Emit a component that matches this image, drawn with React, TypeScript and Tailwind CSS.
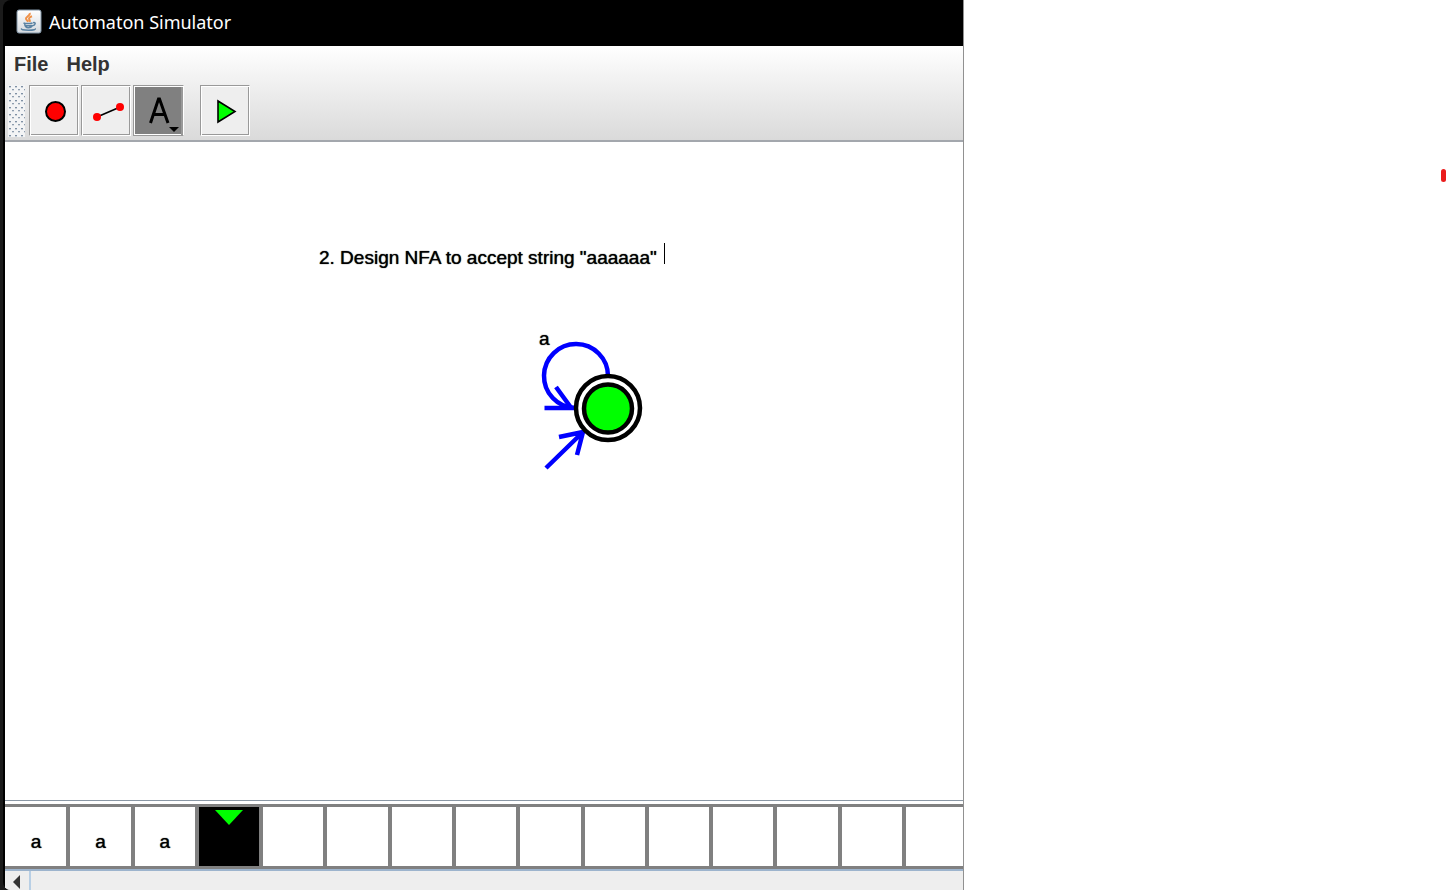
import type { ReactNode } from "react";

const tape: string[] = ["a", "a", "a", "", "", "", "", "", "", "", "", "", "", "", ""];
const head = 3;

function JavaIcon() {
  return (
    <svg width="26" height="26" viewBox="0 0 26 26" aria-hidden="true">
      <defs>
        <linearGradient id="tile" x1="0" y1="0" x2="0" y2="1">
          <stop offset="0" stopColor="#ffffff" />
          <stop offset="1" stopColor="#d3d8dd" />
        </linearGradient>
      </defs>
      <rect x="1" y="1" width="24" height="23" rx="2" fill="url(#tile)" stroke="#8296a8" strokeWidth="1" />
      <path d="M13.600 4c1.200 2.200-3.200 3.400-3.600 5.200-.3 1.600 1.500 2.500 2.200 3.500M16 7.300c-2.200.8-3.400 1.700-2.800 3 .4.9 1.100 1.400.4 2.600" fill="none" stroke="#ef9148" strokeWidth="2" />
      <path d="M7.500 14c1.700.8 7.300.8 9 0M8.700 14.700c.2 3 1 4 3.600 4s3.500-.8 3.900-2.700M17 13.800c3-1 3 2.300-.6 3M9.300 16.700h6.400" fill="none" stroke="#5a82a2" strokeWidth="1.500" />
      <path d="M5.800 19.500c-1.500 1 1.500 1.700 6.700 1.700s7.800-.7 6.500-1.700" fill="none" stroke="#5a82a2" strokeWidth="1.400" />
    </svg>
  );
}

function ToolButton({ label, active = false, children }: { label: string; active?: boolean; children: ReactNode }) {
  return (
    <button
      type="button"
      aria-label={label}
      aria-pressed={active}
      className={
        active
          ? "flex h-[51px] w-[51px] items-center justify-center border border-[#999] border-r-white bg-[#808080] shadow-[inset_1px_1px_0_#fff,inset_-2px_0_0_#999,inset_0_-1px_0_#fff]"
          : "flex h-[51px] w-[50px] items-center justify-center border border-[#999] border-r-white border-b-white bg-[#eee] shadow-[inset_1px_1px_0_#fff,inset_-1px_-1px_0_#999]"
      }
    >
      {children}
    </button>
  );
}

function Toolbar() {
  return (
    <div role="toolbar" aria-label="Tools" className="flex h-[58px] items-start pt-[3px] pl-[3px]">
      <svg width="17" height="52" className="mr-1" aria-hidden="true">
        <defs>
          <pattern id="grip" width="6" height="7" patternUnits="userSpaceOnUse">
            <rect width="6" height="7" fill="#f3f4f5" />
            <rect x="1" y="1" width="2" height="1" fill="#7f90a4" />
            <rect x="1" y="2" width="2" height="1" fill="#c8d0d8" />
            <rect x="4" y="4" width="2" height="1" fill="#8f9eaf" />
            <rect x="4" y="5" width="2" height="1" fill="#d3d9df" />
          </pattern>
        </defs>
        <rect width="17" height="52" fill="url(#grip)" />
      </svg>
      <div className="flex gap-0.5">
        <ToolButton label="State">
          <svg width="48" height="48" viewBox="0 0 48 48">
            <circle cx="25.500" cy="24.500" r="9.500" fill="#f00" stroke="#000" strokeWidth="2" />
          </svg>
        </ToolButton>
        <ToolButton label="Transition">
          <svg width="48" height="48" viewBox="0 0 48 48">
            <path d="M15 30 37 20.500" stroke="#000" strokeWidth="1.600" />
            <circle cx="15" cy="30" r="4" fill="#f00" />
            <circle cx="38" cy="20" r="4" fill="#f00" />
          </svg>
        </ToolButton>
        <ToolButton label="Text" active>
          <svg width="48" height="48" viewBox="0 0 48 48">
            <path d="M15.500 36 23.500 12h1L33 36M18.500 27.500h12" fill="none" stroke="#000" strokeWidth="3" />
            <path d="M34 40h10l-5 5z" fill="#000" />
          </svg>
        </ToolButton>
      </div>
      <div className="ml-4">
        <ToolButton label="Run">
          <svg width="48" height="48" viewBox="0 0 48 48">
            <path d="M17 14v21l17-10.500z" fill="#0f0" stroke="#000" strokeWidth="1.600" />
          </svg>
        </ToolButton>
      </div>
    </div>
  );
}

function Diagram() {
  return (
    <svg width="110" height="140" viewBox="535 335 110 140" className="absolute top-[193px] left-[530px]" role="img" aria-label="Accepting start state with a loop">
      <g fill="none" stroke="#00f" strokeWidth="4.500">
        <path d="M608 376a32 32 0 1 0-33 32" />
        <path d="M544.500 408H575M556 387l16 22" />
        <path d="M546 468 583 432M559 437l24-5-6 23" />
      </g>
      <circle cx="608" cy="408" r="32" fill="#fff" stroke="#000" strokeWidth="4.500" />
      <circle cx="608" cy="408.500" r="24" fill="#0f0" stroke="#000" strokeWidth="4.500" />
    </svg>
  );
}

function Canvas() {
  return (
    <main className="relative min-h-[400px] flex-1 overflow-hidden bg-white text-[19px] leading-6 text-black">
      <div className="absolute top-[101px] left-[314px] flex items-start">
        <input
          aria-label="Note"
          defaultValue={'2. Design NFA to accept string "aaaaaa"'}
          className="mt-[3px] h-6 w-[345px] bg-transparent p-0 outline-none [text-shadow:0_0_1px_#000]"
        />
        <span className="h-[21px] w-px bg-black" />
      </div>
      <Diagram />
      <span className="absolute top-[185px] left-[534px] [text-shadow:0_0_1px_#000]">a</span>
    </main>
  );
}

function Tape() {
  return (
    <section aria-label="Tape" className="border-t border-[#8b98a5] bg-white pt-[3px]">
      <ol className="grid h-[65px] grid-cols-[repeat(15,6.72%)] overflow-hidden border-y-3 border-[#808080] pl-px text-[19px] text-black">
        {tape.map((symbol, i) => (
          <li
            key={i}
            className={
              i === head
                ? "flex justify-center border-r-4 border-[#808080] bg-black pt-[3px]"
                : "flex items-center justify-center border-r-4 border-[#808080] bg-white pt-[11px] [text-shadow:0_0_1px_#000]"
            }
          >
            {i === head ? (
              <svg width="28" height="15" aria-label="Tape head">
                <path d="M0 0h28L14 15z" fill="#0f0" />
              </svg>
            ) : (
              symbol
            )}
          </li>
        ))}
      </ol>
      <div className="flex h-[21px] overflow-hidden border-t-2 border-[#9db4cd] bg-[#eee]">
        <button type="button" aria-label="Scroll left" className="flex h-[22px] w-[26px] items-center border-r-2 border-[#b8cfe5] pl-2">
          <svg width="7" height="14" aria-hidden="true">
            <path d="M7 0v14L0 7z" fill="#333" />
          </svg>
        </button>
      </div>
    </section>
  );
}

export default function App() {
  return (
    <div className="flex min-h-screen items-stretch overflow-hidden bg-white font-['Liberation_Sans',sans-serif]">
      <div className="flex w-[66.6%] flex-col border-r border-[#919191] bg-[#1b1b1b] pl-[3px]">
        <div className="flex flex-1 flex-col overflow-hidden rounded-l-lg bg-black">
          <header className="flex h-[46px] items-center gap-[7px] pb-0.5 pl-[13px]">
            <JavaIcon />
            <h1 className="font-['Noto_Sans','Open_Sans',sans-serif] text-[18px] text-white">Automaton Simulator</h1>
          </header>
          <div className="flex flex-1 flex-col pl-0.5">
            <div className="border-b-2 border-[#a3a7ad] bg-linear-to-b from-white to-[#dadada]">
              <nav aria-label="Main" className="flex h-9 items-center gap-[18px] pl-[9px] text-[20px] font-bold text-[#333]">
                <button type="button">File</button>
                <button type="button">Help</button>
              </nav>
              <Toolbar />
            </div>
            <Canvas />
            <Tape />
          </div>
        </div>
      </div>
      <div className="flex flex-1 items-start justify-end pt-[169px] pr-px">
        <span className="h-[13px] w-[5px] rounded-sm bg-[#ea1c1c]" />
      </div>
    </div>
  );
}
